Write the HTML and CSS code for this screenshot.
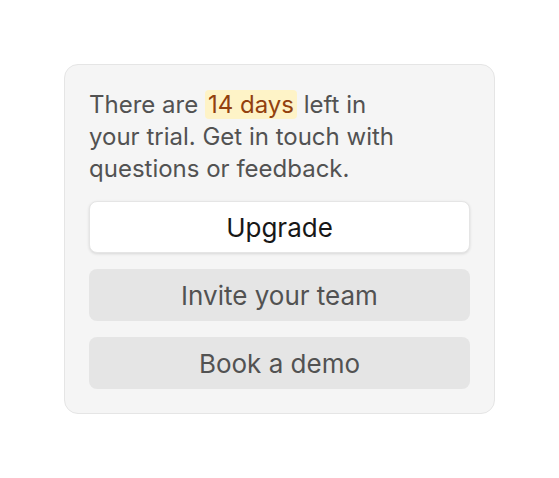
FILE: index.html
```html
<!DOCTYPE html>
<html lang="en">

<head>
    <meta charset="UTF-8">
    <meta name="viewport" content="width=device-width, initial-scale=1.0">
    <title>Trial</title>
    <link rel="stylesheet" href="styles.css">
</head>

<body>
    <div class="card">
        <p class="trial-text">There are <span class="days">14 days</span> left in your trial. Get in touch with questions or feedback.</p>
        <div class="actions">
            <button class="btn btn-primary">Upgrade</button>
            <button class="btn btn-secondary">Invite your team</button>
            <button class="btn btn-secondary">Book a demo</button>
        </div>
    </div>
</body>

</html>
```

FILE: styles.css
```css
/* General Styles */
html,
body {
    height: 100%;
}

body {
    margin: 0;
    font-family: Inter, "Noto Sans", sans-serif;
    background-color: #fff;
    display: flex;
    align-items: center;
    justify-content: center;
}

/* Card */
.card {
    box-sizing: border-box;
    width: 431px;
    padding: 24px;
    background-color: #f5f5f5;
    border: 1px solid #e5e5e5;
    border-radius: 14px;
}

.trial-text {
    margin: 0;
    max-width: 322px;
    font-size: 24px;
    line-height: 32px;
    color: #525252;
}

.days {
    background-color: #fef3c7;
    color: #92400e;
    padding: 0 3px;
    border-radius: 4px;
}

/* Buttons */
.actions {
    margin-top: 16px;
    display: flex;
    flex-direction: column;
    gap: 16px;
}

.btn {
    height: 52px;
    font-family: inherit;
    font-size: 26px;
    border-radius: 8px;
    cursor: pointer;
}

.btn-primary {
    background-color: #fff;
    color: #171717;
    border: 1px solid #e5e5e5;
    box-shadow: 0 1px 3px rgba(0, 0, 0, 0.12);
}

.btn-secondary {
    background-color: #e5e5e5;
    color: #525252;
    border: none;
}
```
